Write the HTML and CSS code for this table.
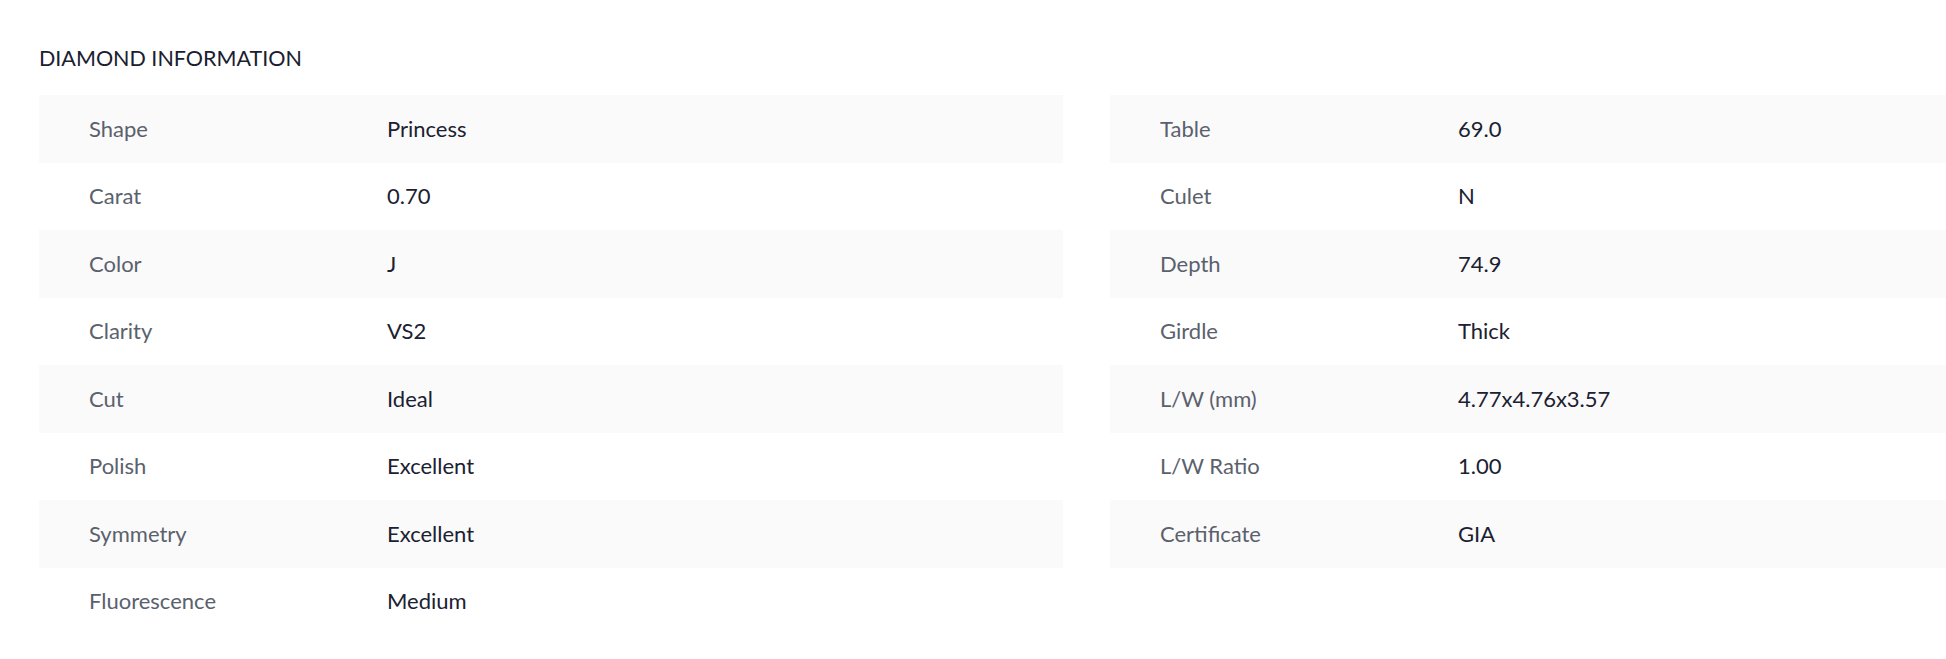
FILE: index.html
```html
<!DOCTYPE html>
<html lang="en">
<head>
<meta charset="utf-8">
<title>Diamond Information</title>
<link rel="stylesheet" href="styles.css">
</head>
<body>
<section class="info">
  <h2 class="info-title">DIAMOND INFORMATION</h2>
  <div class="info-grid">
    <div class="info-col">
      <div class="row"><span class="label">Shape</span><span class="value">Princess</span></div>
      <div class="row"><span class="label">Carat</span><span class="value">0.70</span></div>
      <div class="row"><span class="label">Color</span><span class="value">J</span></div>
      <div class="row"><span class="label">Clarity</span><span class="value">VS2</span></div>
      <div class="row"><span class="label">Cut</span><span class="value">Ideal</span></div>
      <div class="row"><span class="label">Polish</span><span class="value">Excellent</span></div>
      <div class="row"><span class="label">Symmetry</span><span class="value">Excellent</span></div>
      <div class="row"><span class="label">Fluorescence</span><span class="value">Medium</span></div>
    </div>
    <div class="info-col">
      <div class="row"><span class="label">Table</span><span class="value">69.0</span></div>
      <div class="row"><span class="label">Culet</span><span class="value">N</span></div>
      <div class="row"><span class="label">Depth</span><span class="value">74.9</span></div>
      <div class="row"><span class="label">Girdle</span><span class="value">Thick</span></div>
      <div class="row"><span class="label">L/W (mm)</span><span class="value">4.77x4.76x3.57</span></div>
      <div class="row"><span class="label">L/W Ratio</span><span class="value">1.00</span></div>
      <div class="row"><span class="label">Certificate</span><span class="value">GIA</span></div>
    </div>
  </div>
</section>
</body>
</html>
```

FILE: styles.css
```css
html, body {
  margin: 0;
  padding: 0;
  background: #ffffff;
}

body {
  font-family: "Lato", "Noto Sans", sans-serif;
  font-size: 22px;
  line-height: 26px;
  color: #1b2131;
}

.info {
  padding: 45px 0 0 39px;
}

.info-title {
  margin: 0 0 24px 0;
  font-size: 21.5px;
  font-weight: 400;
  line-height: 26px;
  color: #1a2030;
}

.info-grid {
  display: grid;
  grid-template-columns: 1024px minmax(0, 1fr);
  column-gap: 47px;
  align-items: start;
}

.info-col {
  display: flex;
  flex-direction: column;
}

.row {
  display: flex;
  align-items: center;
  height: 67.5px;
  padding-left: 50px;
}

.row:nth-child(odd) {
  background: #fafafa;
}

.label {
  flex: 0 0 298px;
  color: #5a616d;
}

.value {
  color: #1b2131;
}
```
